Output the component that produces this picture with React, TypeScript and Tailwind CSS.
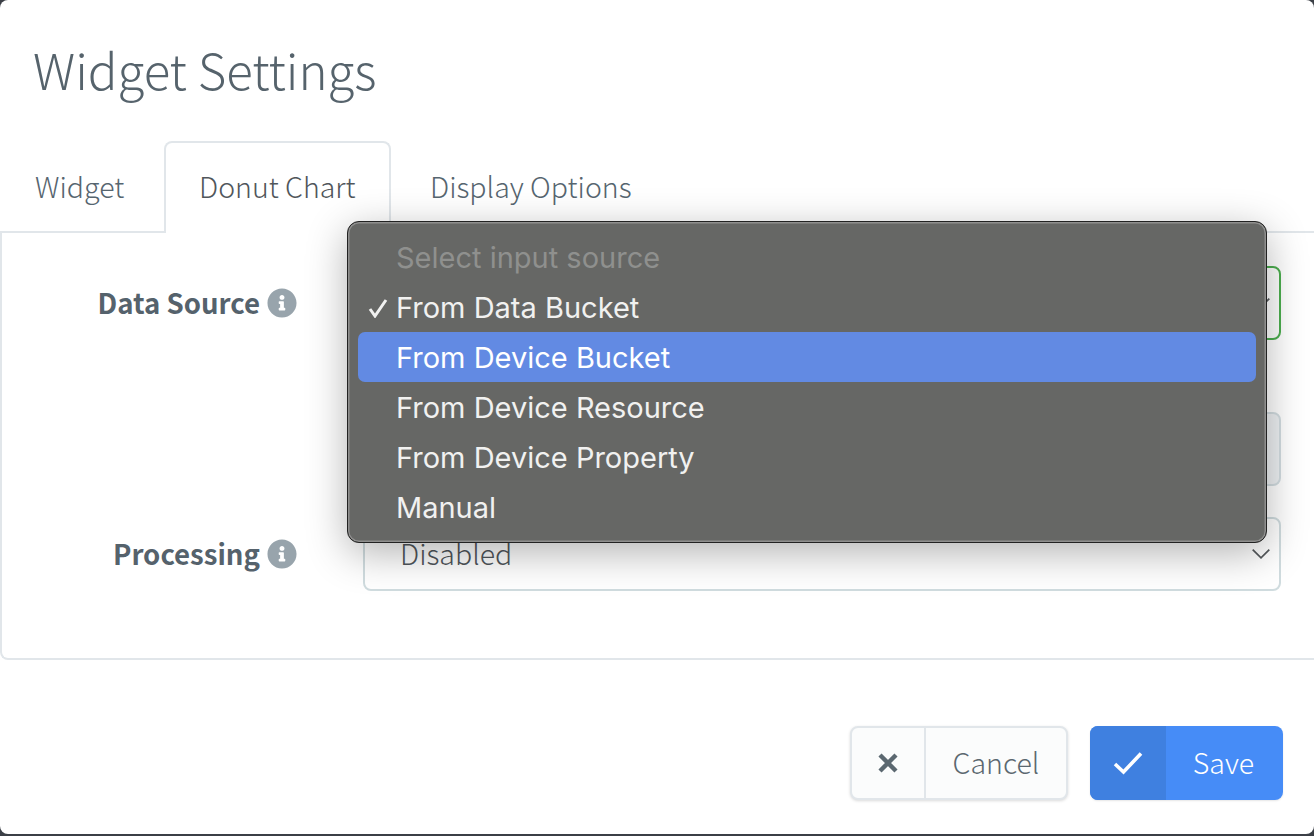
import { FaInfoCircle } from "react-icons/fa";

const sans = "font-['Noto_Sans_CJK_SC','Noto_Sans',sans-serif]";

function Chevron() {
    return (
        <svg width="18" height="10" viewBox="0 0 18 10" fill="none" className="absolute right-[9px] top-1/2 -translate-y-1/2">
            <path d="M0.7 0.7L9 8.8L17.3 0.7" stroke="#55595c" strokeWidth="1.7" />
        </svg>
    );
}

function Label({ text }: { text: string }) {
    return (
        <div className="w-[295px] shrink-0 flex justify-end items-center gap-[7px] font-bold text-[27.6px] leading-none text-[#55626c]">
            <span>{text}</span>
            <FaInfoCircle className="w-[30px] h-[30px] text-[#98a4ac]" />
        </div>
    );
}

const options = ["Select input source", "From Data Bucket", "From Device Bucket", "From Device Resource", "From Device Property", "Manual"];

export default function App() {
    return (
        <div className={`w-[1314px] h-[836px] overflow-hidden bg-[#3b3f46] ${sans}`}>
            <div className="relative w-full h-[834px] bg-white rounded-[8px] flex flex-col">
                <h1 className="pl-[33px] pt-[36px] h-[141px] text-[49.2px] leading-[66px] font-light text-[#56636c]">Widget Settings</h1>

                {/* Tabs */}
                <div className="flex h-[92px] text-[28.5px] leading-none font-light">
                    <div className="w-[164px] pl-[35px] pt-[31px] border-b-2 border-[#e1e6ea] text-[#56656f]">Widget</div>
                    <div className="w-[227px] pl-[33px] pt-[29px] bg-white border-2 border-b-0 border-[#e1e6ea] rounded-t-[8px] text-[#50565b]">Donut Chart</div>
                    <div className="flex-1 pl-[39px] pt-[31px] border-b-2 border-[#e1e6ea] text-[#56656f]">Display Options</div>
                </div>

                {/* Panel */}
                <div className="h-[427px] pt-[33px] pr-[33px] flex flex-col border-l-2 border-b-2 border-[#e1e6ea] rounded-bl-[8px]">
                    <div className="flex items-center h-[74px]">
                        <Label text="Data Source" />
                        <div className="relative ml-[66px] flex-1 h-full border-2 border-[#4cae4f] rounded-[8px]">
                            <Chevron />
                        </div>
                    </div>
                    <div className="mt-[72px] h-[74px] ml-[361px] bg-[#eef1f3] border-2 border-[#d3dde1] rounded-[8px]" />
                    <div className="mt-[31px] flex items-center h-[74px]">
                        <Label text="Processing" />
                        <div className="relative ml-[66px] flex-1 h-full border-2 border-[#d0dcdf] rounded-[8px] pl-[35px] pb-[2px] flex items-center text-[28.5px] font-light text-[#50565b]">
                            Disabled
                            <Chevron />
                        </div>
                    </div>
                </div>

                {/* Footer */}
                <div className="flex justify-end gap-[22px] pr-[31px] pt-[66px] text-[28.5px] font-light">
                    <button className="flex w-[218px] h-[74px] items-stretch bg-[#fbfcfc] border-2 border-[#e1e6ea] rounded-[8px] shadow-[0_1px_3px_rgba(0,0,0,0.15)] text-[#5b6870]">
                        <span className="w-[74px] border-r-2 border-[#e1e6ea] flex items-center justify-center">
                            <svg width="20" height="20" viewBox="0 0 20 20" fill="none">
                                <path d="M2 2L18 18M18 2L2 18" stroke="#5b6870" strokeWidth="4.4" />
                            </svg>
                        </span>
                        <span className="flex-1 flex items-center justify-center pb-[2px]">Cancel</span>
                    </button>
                    <button className="flex w-[193px] h-[74px] items-stretch bg-[#468cf7] rounded-[8px] overflow-hidden text-white shadow-[0_1px_2px_rgba(0,0,0,0.1)]">
                        <span className="w-[76px] bg-[#3f80e0] flex items-center justify-center">
                            <svg width="30" height="24" viewBox="0 0 30 24" fill="none">
                                <path d="M2 13L10.5 21L28 2.5" stroke="white" strokeWidth="3.6" />
                            </svg>
                        </span>
                        <span className="flex-1 flex items-center justify-center pr-[2px] pb-[2px]">Save</span>
                    </button>
                </div>

                {/* Native select menu */}
                <div className="absolute left-[347px] top-[221px] w-[920px] h-[322px] bg-[#666765] rounded-[12px] border border-[#222] shadow-[inset_0_0_0_1.5px_#8f8f8e,0_10px_40px_rgba(0,0,0,0.3)] pt-[10px] px-[10px] font-['Inter',sans-serif] text-[29px] leading-[51px] text-[#f1f1f0]">
                    {options.map((o, i) => (
                        <div
                            key={o}
                            className={`relative h-[50px] pl-[38px] rounded-[7px] ${i === 2 ? "bg-[#628ae3] text-white" : ""} ${i === 0 ? "text-[#8f908e]" : ""}`}
                        >
                            {i === 1 && (
                                <svg width="20" height="20" viewBox="0 0 20 20" fill="none" className="absolute left-[10px] top-[16px]">
                                    <path d="M2 11L7 18L18 2" stroke="#f1f1f0" strokeWidth="3" />
                                </svg>
                            )}
                            {o}
                        </div>
                    ))}
                </div>
            </div>
        </div>
    );
}
